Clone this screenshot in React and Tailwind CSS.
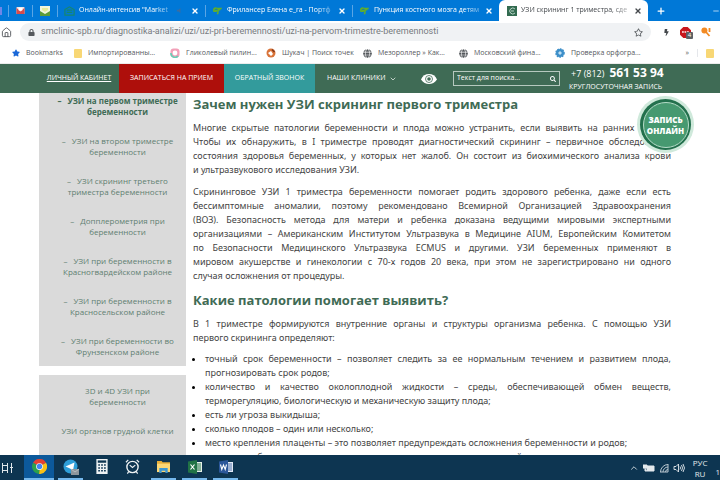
import { FaStar, FaLock, FaGlobe, FaBolt, FaSearch, FaRegStar } from "react-icons/fa";
import { Home, X, Plus, Minus, ChevronDown, ChevronUp } from "lucide-react";

const tabs = [
    { title: "Онлайн-интенсив \"Market", icon: "mail", width: "w-[148px]", sound: true },
    { title: "Фрилансер Елена e_ra - Портф", icon: "fl", width: "w-[147px]" },
    { title: "Пункция костного мозга детям", icon: "fl", width: "w-[147px]" },
];

const bookmarks = [
    { title: "Bookmarks", icon: "star", width: "w-[62px]" },
    { title: "Импортированны...", icon: "folder", width: "w-[96px]" },
    { title: "Гликолевый пилин...", icon: "ring", width: "w-[96px]" },
    { title: "Шукач | Поиск точек", icon: "fox", width: "w-[97px]" },
    { title: "Мезороллер » Как...", icon: "globe", width: "w-[96px]" },
    { title: "Московский фина...", icon: "globe", width: "w-[96px]" },
    { title: "Проверка орфогра...", icon: "gear", width: "w-[96px]" },
];

const sideLinks = [
    ["УЗИ на первом триместре", "беременности"],
    ["УЗИ на втором триместре", "беременности"],
    ["УЗИ скрининг третьего", "триместра беременности"],
    ["Допплерометрия при", "беременности"],
    ["УЗИ при беременности в", "Красногвардейском районе"],
    ["УЗИ при беременности в", "Красносельском районе"],
    ["УЗИ при беременности во", "Фрунзенском районе"],
];

const first = [
    "Многие скрытые патологии беременности и плода можно устранить, если выявить на ранних сроках.",
    "Чтобы их обнаружить, в I триместре проводят диагностический скрининг – первичное обследование",
    "состояния здоровья беременных, у которых нет жалоб. Он состоит из биохимического анализа крови",
    "и ультразвукового исследования УЗИ.",
];

const second = [
    "Скрининговое УЗИ 1 триместра беременности помогает родить здорового ребенка, даже если есть",
    "бессимптомные аномалии, поэтому рекомендовано Всемирной Организацией Здравоохранения",
    "(ВОЗ). Безопасность метода для матери и ребенка доказана ведущими мировыми экспертными",
    "организациями – Американским Институтом Ультразвука в Медицине AIUM, Европейским Комитетом",
    "по Безопасности Медицинского Ультразвука ECMUS и другими. УЗИ беременных применяют в",
    "мировом акушерстве и гинекологии с 70-х годов 20 века, при этом не зарегистрировано ни одного",
    "случая осложнения от процедуры.",
];

const third = [
    "В 1 триместре формируются внутренние органы и структуры организма ребенка. С помощью УЗИ",
    "первого скрининга определяют:",
];

const items = [
    ["точный срок беременности – позволяет следить за ее нормальным течением и развитием плода,", "прогнозировать срок родов;"],
    ["количество и качество околоплодной жидкости – среды, обеспечивающей обмен веществ,", "терморегуляцию, биологическую и механическую защиту плода;"],
    ["есть ли угроза выкидыша;"],
    ["сколько плодов – один или несколько;"],
    ["место крепления плаценты – это позволяет предупреждать осложнения беременности и родов;"],
    ["жизнеспособность плода – по сердечным сокращениям и двигательной активности;"],
];

const Lines = ({ lines }) => lines.map((line, i) => (
    <span
        key={line}
        className={i < lines.length - 1 ? "block whitespace-nowrap [text-align-last:justify]" : "block whitespace-nowrap"}
    >
        {line}
    </span>
));

const TabIcon = ({ name }) => {
    if (name === "mail") {
        return (
            <svg viewBox="0 0 12 12" className="size-[11px] shrink-0">
                <path d="M1 5 6 2l5 3v6H1zM3 5.500h6M3 8h6" fill="none" stroke="#16876d" strokeWidth="1.3" />
            </svg>
        );
    }
    return (
        <svg viewBox="0 0 12 12" className="size-[11px] shrink-0">
            <path d="M1 6c0-4 3-4 5-3h5l-1 2H9v1H7.500L7 10H5l1-3c-3 1-5 1-5-1z" fill="#5fae2c" />
            <path d="M3 5.500c1-1 2-1 3-.5" stroke="#0b6fce" fill="none" />
        </svg>
    );
};

const BookmarkIcon = ({ name }) => {
    if (name === "star") return <FaStar className="size-2 shrink-0 text-[#1a68d8]" />;
    if (name === "folder") return <span className="h-[9px] w-2 shrink-0 rounded-[1px] bg-[#f8d775]" />;
    if (name === "globe") return <FaGlobe className="size-[9px] shrink-0 text-[#54585c]" />;
    if (name === "ring") {
        return (
            <svg viewBox="0 0 10 10" className="size-[10px] shrink-0">
                <rect x=".5" y=".5" width="9" height="9" rx="3" fill="#f2a0b8" />
                <path d="M1 5a4 4 0 0 0 7 3" stroke="#67cfb5" strokeWidth="1.6" fill="none" />
                <circle cx="5" cy="5" r="2.4" fill="#fff" />
            </svg>
        );
    }
    if (name === "fox") {
        return (
            <svg viewBox="0 0 10 10" className="size-[10px] shrink-0">
                <circle cx="5" cy="5" r="4.5" fill="#d9743a" />
                <path d="M2 5 5 3l2 3-2 2z" fill="#fff" />
                <path d="M6 1.500 8.500 4" stroke="#7d3519" strokeWidth="1.4" />
            </svg>
        );
    }
    return (
        <svg viewBox="0 0 10 10" className="size-[10px] shrink-0">
            <circle cx="5" cy="5" r="4" fill="#3d8fc9" stroke="#3d8fc9" strokeWidth="1.6" strokeDasharray="1.6 1" />
            <path d="m3 5 2-2 2 2-2 2z" fill="#bfe0f5" />
        </svg>
    );
};

const Browser = () => (
    <div className="shrink-0 bg-white">
        <div className="flex h-[21px] items-center overflow-hidden bg-[#0078d7] text-[7px] text-white">
            <div className="flex shrink-0 items-center">
                <span className="mr-[6px] h-2 w-0.5 bg-[#6d86e8]" />
                <span className="h-3 w-px bg-[#5aa5e5]" />
                <svg viewBox="0 0 10 10" className="mx-[7px] size-[9px]">
                    <rect x=".5" y="1" width="9" height="8" rx="1" fill="#e9e4e8" />
                    <path d="M.5 2v7h9V2L5 6z" fill="#d84b4b" />
                    <path d="M3 2h4v3H3z" fill="#fff" />
                </svg>
                <span className="h-3 w-px bg-[#5aa5e5]" />
                <svg viewBox="0 0 10 10" className="mx-[7px] size-[10px]">
                    <path d="M0 0h10v10H0z" fill="#f0f6dc" />
                    <path d="M0 5l5 3 5-3v5H0z" fill="#5c9b38" />
                    <path d="M2 2h6v2L5 6 2 4z" fill="#e4eb9a" />
                </svg>
            </div>
            {tabs.map((tab) => (
                <div key={tab.title} className={`${tab.width} flex h-3 shrink-0 items-center border-l border-[#5aa5e5] pl-[6px]`}>
                    <TabIcon name={tab.icon} />
                    <span className="ml-1 whitespace-nowrap [mask-image:linear-gradient(to_right,#000_85%,#0006)]">{tab.title}</span>
                    {tab.sound && (
                        <svg viewBox="0 0 8 8" className="ml-2 size-[7px]">
                            <path d="M1 3h2l2-2v6L3 5H1z" fill="#3d6c9e" />
                        </svg>
                    )}
                    <button aria-label="Закрыть" className="mr-[6px] ml-auto shrink-0"><X className="size-2" strokeWidth={4} /></button>
                </div>
            ))}
            <div className="flex h-full w-[149px] shrink-0 items-center rounded-t-md bg-white pl-2 text-[#45494d]">
                <svg viewBox="0 0 10 10" className="size-[10px] shrink-0">
                    <path d="M0 0h10v10H0z" fill="#326b50" />
                    <path d="M8 3a3 3 0 1 0 0 4M4 5h3" stroke="#b9d5c7" fill="none" />
                </svg>
                <span className="ml-1 whitespace-nowrap [mask-image:linear-gradient(to_right,#000_85%,#0006)]">УЗИ скрининг 1 триместра, сде</span>
                <button aria-label="Закрыть" className="mr-[6px] ml-auto shrink-0"><X className="size-2" strokeWidth={4} /></button>
            </div>
            <button aria-label="Новая вкладка" className="ml-2"><Plus className="size-[10px]" strokeWidth={3} /></button>
            <Minus className="ml-auto size-2" />
        </div>
        <div className="flex h-[22px] items-center">
            <button aria-label="Домой" className="ml-px"><Home className="size-[11px] text-[#55595d]" /></button>
            <div className="ml-2 flex h-[18px] flex-1 items-center rounded-full bg-[#f0f2f4] px-2 text-[#777b80]">
                <FaLock className="size-[7px] text-[#55595d]" />
                <input
                    aria-label="Адрес"
                    className="ml-[6px] min-w-0 flex-1 bg-transparent font-['Roboto',sans-serif] text-[9px] outline-none"
                    defaultValue="smclinic-spb.ru/diagnostika-analizi/uzi/uzi-pri-beremennosti/uzi-na-pervom-trimestre-beremennosti"
                />
                <FaRegStar className="size-[9px] text-[#55595d]" />
            </div>
            <div className="flex w-[69px] items-center pl-3">
                <FaBolt className="mr-[10px] size-[7px] shrink-0 text-[#44484c]" />
                <div className="relative mr-[10px] size-[11px] shrink-0">
                    <svg viewBox="0 0 11 11" className="size-[11px]">
                        <path d="M3.300 0h4.400L11 3.300v4.400L7.700 11H3.300L0 7.700V3.300z" fill="#c8161d" />
                        <path d="M2 5h7" stroke="#f1b9bb" strokeWidth="2" strokeDasharray="1.800 .7" />
                    </svg>
                    <span className="absolute top-[5px] left-[6px] size-[7px] rounded-[1px] bg-[#5d6165] text-center text-[6px] leading-[7px] text-white">4</span>
                </div>
                <svg viewBox="0 0 10 10" className="size-[10px] shrink-0">
                    <circle cx="3.400" cy="3.600" r="3" fill="#f28a24" />
                    <path d="m5 5 3.500 4M8.500 1v4" stroke="#f28a24" strokeWidth="1.800" />
                </svg>
            </div>
        </div>
        <div className="flex h-[21px] items-center border-b border-[#ececec] pl-3 text-[7px] text-[#55585c]">
            {bookmarks.map((mark) => (
                <a href="#" key={mark.title} className={`${mark.width} flex shrink-0 items-center gap-[6px] whitespace-nowrap`}>
                    <BookmarkIcon name={mark.icon} />
                    {mark.title}
                </a>
            ))}
            <span className="ml-auto">»</span>
            <span className="mx-2 h-2 w-px bg-gray-200" />
            <span className="mr-[6px] h-[9px] w-2 shrink-0 rounded-[1px] bg-[#f8d775]" />
        </div>
    </div>
);

const Header = () => (
    <header className="flex h-[29px] shrink-0 items-stretch bg-[#3f6b55] pl-[39px] text-[7px] text-white">
        <a href="#" className="flex w-20 items-center justify-center whitespace-nowrap underline">ЛИЧНЫЙ КАБИНЕТ</a>
        <button className="w-[105px] bg-[#ae0f0b]">ЗАПИСАТЬСЯ НА ПРИЕМ</button>
        <button className="w-[91px] bg-[#339b9c]">ОБРАТНЫЙ ЗВОНОК</button>
        <button className="flex w-[92px] items-center gap-[3px] pl-3 whitespace-nowrap">
            НАШИ КЛИНИКИ <ChevronDown className="size-2" />
        </button>
        <button aria-label="Версия для слабовидящих" className="ml-[14px]">
            <svg viewBox="0 0 16 10" className="h-[10px] w-4">
                <path d="M0 5.500C3-1.800 13-1.800 16 5.500 12 11.500 4 11.500 0 5.500z" fill="#fff" />
                <circle cx="8" cy="5" r="3.500" fill="none" stroke="#3f6b55" strokeWidth=".8" />
                <circle cx="8" cy="5" r="1.800" fill="#3f6b55" />
            </svg>
        </button>
        <form className="ml-4 flex h-[15px] w-[107px] items-center self-center border border-[#b6c9bf] px-[3px]">
            <input aria-label="Поиск" placeholder="Текст для поиска..." className="min-w-0 flex-1 bg-transparent text-[7px] outline-none placeholder:text-white" />
            <FaSearch className="size-[6px]" />
        </form>
        <div className="ml-[9px] whitespace-nowrap">
            <div className="mt-0.5 flex items-baseline gap-[5px] pl-0.5 leading-[14px]">
                <span className="text-[9px]">+7 (812)</span>
                <b className="text-[12px]">561 53 94</b>
            </div>
            <div className="leading-3">КРУГЛОСУТОЧНАЯ ЗАПИСЬ</div>
        </div>
    </header>
);

const Sidebar = () => (
    <aside className="w-[147px] shrink-0 text-center text-[8px] leading-[11px] text-[#5f7f71]">
        <nav className="flex flex-col gap-[18px] bg-[#dadada] pt-[2px] pb-[9px] pl-[10px]">
            {sideLinks.map(([top, bottom], i) => (
                <a href="#" key={top + bottom} className={i === 0 ? "font-bold text-[#3f6b55]" : ""}>
                    <span className="mr-[6px]">–</span>{top}<br />{bottom}
                </a>
            ))}
        </nav>
        <nav className="mt-[9px] flex h-28 flex-col gap-[18px] bg-[#dadada] pt-[10px] pl-[10px]">
            <a href="#">3D и 4D УЗИ при<br />беременности</a>
            <a href="#">УЗИ органов грудной клетки</a>
        </nav>
    </aside>
);

const ChromeIcon = () => (
    <svg viewBox="0 0 16 16" className="size-[15px]">
        <path d="M8 8 1.100 4A8 8 0 0 1 15 4z" fill="#e34133" />
        <path d="M8 8 15 4a8 8 0 0 1-7.500 12z" fill="#fbc116" />
        <path d="M8 8 7.500 16A8 8 0 0 1 1.100 4z" fill="#2da14c" />
        <circle cx="8" cy="8" r="3.600" fill="#fff" />
        <circle cx="8" cy="8" r="2.900" fill="#4285f4" />
    </svg>
);

const TelegramIcon = () => (
    <svg viewBox="0 0 16 16" className="size-4">
        <circle cx="7.500" cy="7.500" r="7" fill="#2f9fd8" />
        <path d="m2.500 7.500 9-4L10 11.500 7 9.500z" fill="#fff" />
        <path d="M8 10h8v6H8z" fill="#8d969d" />
        <path d="m8 10 4 3 4-3" stroke="#c9ced1" strokeWidth=".7" fill="none" />
    </svg>
);

const CalcIcon = () => (
    <svg viewBox="0 0 12 16" className="h-[15px] w-3">
        <path d="M0 0h12v16H0z" fill="#eef2f4" />
        <path d="M1.500 1.500h9v2.500h-9z" fill="#0d3551" />
        <path d="M2 6.500h8M2 9.500h8M2 12.500h8" stroke="#0d3551" strokeWidth="1.600" strokeDasharray="1.800 1.300" />
    </svg>
);

const ClockIcon = () => (
    <svg viewBox="0 0 16 16" className="size-[15px]">
        <circle cx="8" cy="8.500" r="6" fill="none" stroke="#eef2f4" strokeWidth="1.500" />
        <path d="M5 6.500 8 9l3-2.500M1 3.500 3.500 1M15 3.500 12.500 1M4 13.500 2.500 15.500M12 13.500l1.500 2" fill="none" stroke="#eef2f4" strokeWidth="1.300" />
    </svg>
);

const FolderIcon = () => (
    <svg viewBox="0 0 16 14" className="h-[13px] w-[15px]">
        <path d="M1 1h5l1 1.500h8V13H1z" fill="#e8ae38" />
        <path d="M1 4h14v9H1z" fill="#fbd775" />
        <path d="M3.500 14V8.500h9V14H10v-2.500H6V14z" fill="#3b97d3" />
    </svg>
);

const ExcelIcon = () => (
    <svg viewBox="0 0 14 14" className="size-[14px]">
        <path d="M7 2h7v10H7z" fill="#e5f0e8" />
        <path d="M8 4h5M8 6h5M8 8h5M8 10h5" stroke="#217346" strokeWidth="1" />
        <path d="M0 1.500 9 0v14l-9-1.500z" fill="#217346" />
        <path d="m2.500 4.500 4 5M6.500 4.500l-4 5" stroke="#fff" strokeWidth="1.200" />
    </svg>
);

const WordIcon = () => (
    <svg viewBox="0 0 14 14" className="size-[14px]">
        <path d="M7 2h7v10H7z" fill="#e3e9f5" />
        <path d="M9 4h4M9 6h4M9 8h4M9 10h4" stroke="#2b579a" strokeWidth=".8" />
        <path d="M0 1.500 9 0v14l-9-1.500z" fill="#2b579a" />
        <path d="m1.500 4.500 1.300 5 1.700-4.500 1.700 4.500 1.300-5" fill="none" stroke="#fff" strokeWidth="1.100" />
    </svg>
);

const apps = [
    { name: "Telegram", icon: <TelegramIcon />, open: true },
    { name: "Калькулятор", icon: <CalcIcon /> },
    { name: "Будильник", icon: <ClockIcon /> },
    { name: "Проводник", icon: <FolderIcon />, open: true },
    { name: "Excel", icon: <ExcelIcon />, open: true },
    { name: "Word", icon: <WordIcon />, open: true },
];

const Taskbar = () => (
    <footer className="flex h-[25px] shrink-0 items-center bg-[#0d3551] text-white">
        <button aria-label="Представление задач" className="flex w-6 pl-px">
            <svg viewBox="0 0 13 12" className="h-3 w-[13px]">
                <path d="M1.500 1v10M6.500 1v10M1.500 3.500h5M1.500 8.500h5M10.500 1v10M9 5.500h3" stroke="#dfe6ea" fill="none" />
            </svg>
        </button>
        <button aria-label="Chrome" className="flex h-full w-[30px] items-center justify-center border-b-2 border-[#76b9ed] bg-[#0c599b]">
            <ChromeIcon />
        </button>
        <div className="ml-px flex h-full">
            {apps.map((app) => (
                <button key={app.name} aria-label={app.name} className="flex w-[31px] flex-col items-center">
                    <span className="flex flex-1 items-center">{app.icon}</span>
                    <span className={app.open ? "h-0.5 w-[25px] bg-[#76b9ed]" : "h-0.5"} />
                </button>
            ))}
        </div>
        <div className="ml-auto flex items-center gap-1 text-[#e3e9ed]">
            <ChevronUp className="size-[10px]" />
            <svg viewBox="0 0 12 8" className="h-2 w-3">
                <path d="M4 2h7v5H4z" fill="#e3e9ed" stroke="#e3e9ed" />
                <path d="M0 1h4v3H0zM2 4v3h2" fill="#e3e9ed" stroke="#e3e9ed" />
            </svg>
            <svg viewBox="0 0 10 10" className="size-[10px]">
                <path d="M9 1v8H1M9 4a5 5 0 0 0-5 5M9 6.500A2.500 2.500 0 0 0 6.500 9M9 1.500A7.500 7.500 0 0 0 1.500 9" fill="none" stroke="#b9c6cf" />
            </svg>
            <svg viewBox="0 0 12 10" className="h-[10px] w-3">
                <path d="M1 3.500h2L5.500 1v8L3 6.500H1zM7 3.500q1 1.500 0 3M8.500 2q2 3 0 6M10 1q3 4 0 8" fill="none" stroke="#e3e9ed" strokeWidth=".9" />
            </svg>
            <span className="mx-1 text-center text-[8px] leading-[11px]">РУС<br />RU</span>
            <span className="pt-2 text-[8px]">1</span>
        </div>
    </footer>
);

const App = () => {
    return (
        <div className="flex h-screen flex-col overflow-hidden bg-white font-['Open_Sans',sans-serif]">
            <Browser />
            <Header />
            <main className="relative flex min-h-0 flex-1 gap-[7px] overflow-hidden pr-[49px] pl-[39px]">
                <Sidebar />
                <article className="min-w-0 flex-1 font-['Noto_Sans',sans-serif] text-[9px] leading-[14px] text-[#444]">
                    <h2 className="mt-[2px] font-['Open_Sans',sans-serif] text-[13px] leading-[18px] font-bold text-[#3f6b55]">Зачем нужен УЗИ скрининг первого триместра</h2>
                    <p className="mt-2"><Lines lines={first} /></p>
                    <p className="mt-2"><Lines lines={second} /></p>
                    <h2 className="mt-2 font-['Open_Sans',sans-serif] text-[13px] leading-[18px] font-bold text-[#3f6b55]">Какие патологии помогает выявить?</h2>
                    <p className="mt-2"><Lines lines={third} /></p>
                    <ul className="mt-[7px] list-disc pl-3 marker:text-black">
                        {items.map((item) => <li key={item[0]}><Lines lines={item} /></li>)}
                    </ul>
                </article>
                <button className="absolute top-[3px] right-[26px] flex size-[57px] items-center justify-center rounded-full bg-[#cfe9db]">
                    <span className="flex size-[51px] items-center justify-center rounded-full bg-[#23704d]">
                        <span className="flex size-[46px] items-center justify-center rounded-full border border-[#b5dcc8] bg-[#469970] text-[8px] leading-[11px] font-extrabold text-white">
                            ЗАПИСЬ<br />ОНЛАЙН
                        </span>
                    </span>
                </button>
            </main>
            <Taskbar />
        </div>
    );
};

export default App;
